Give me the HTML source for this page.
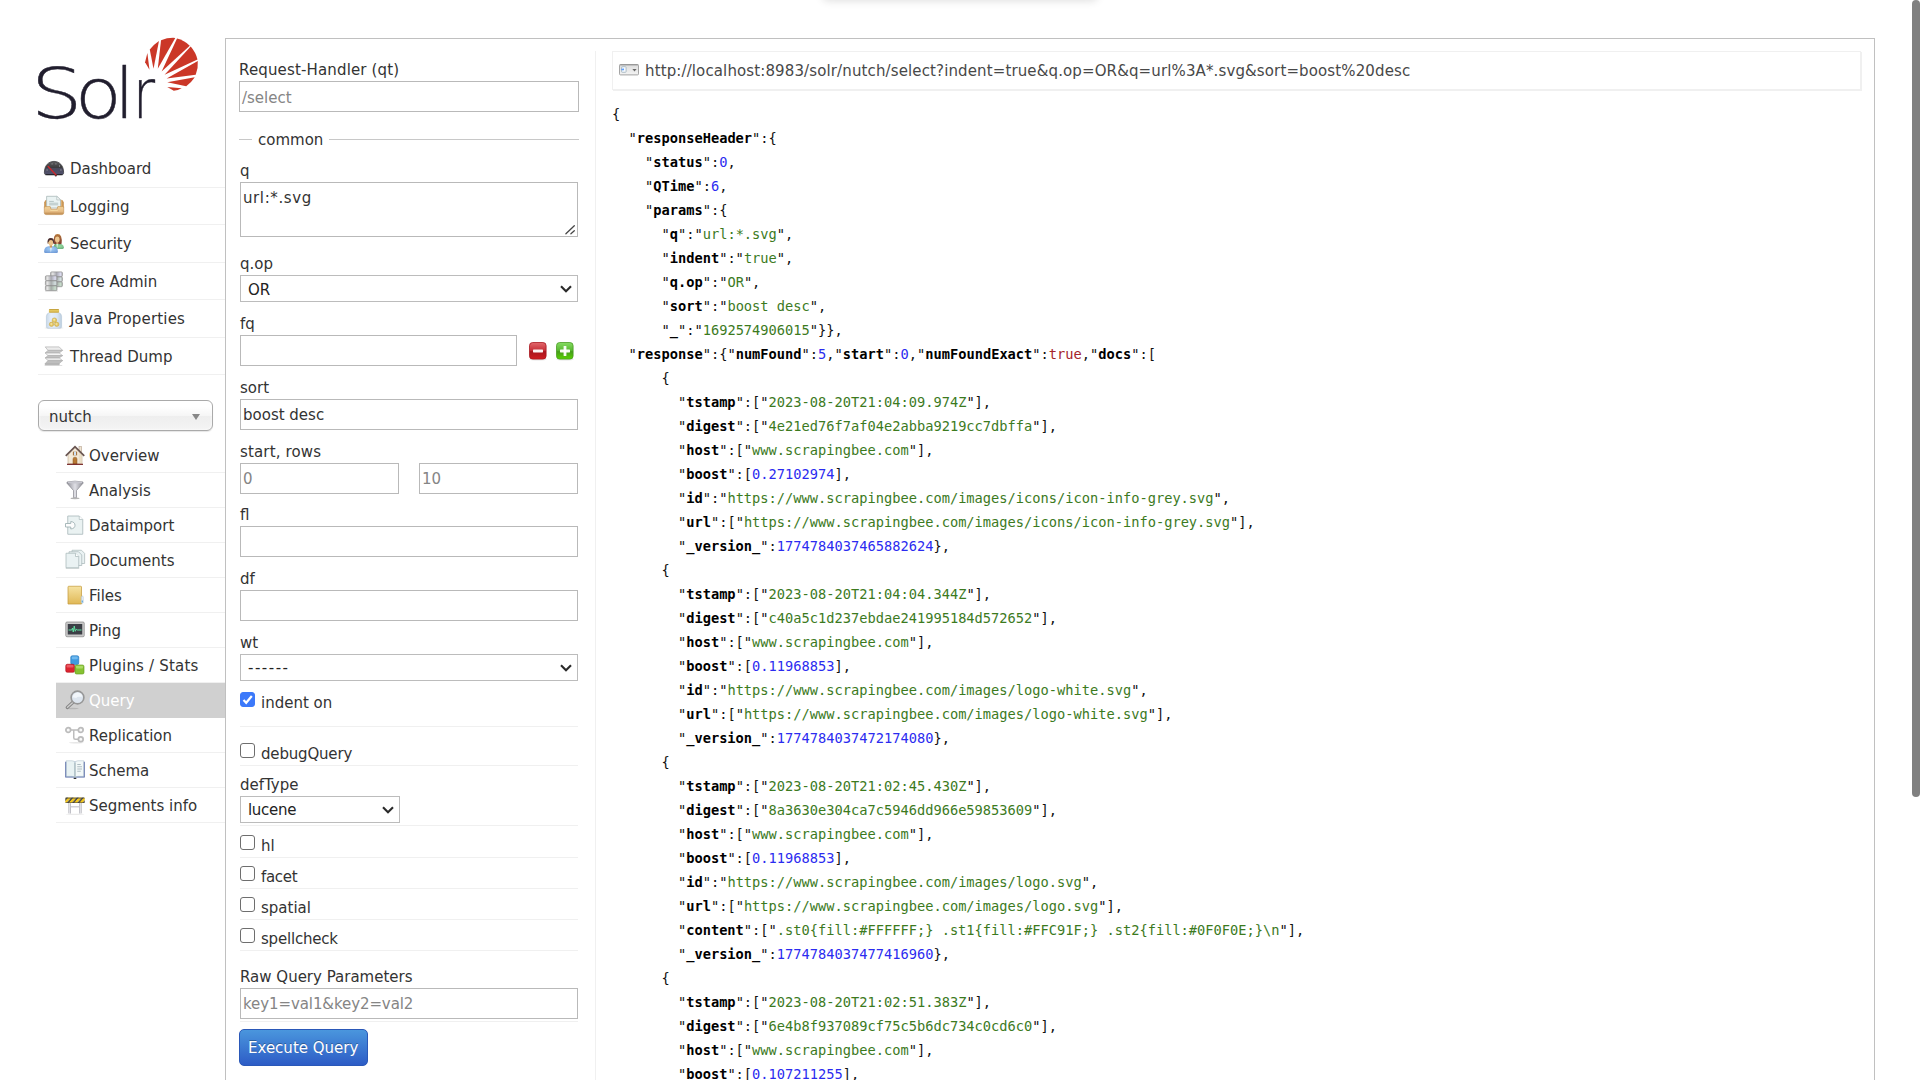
<!DOCTYPE html>
<html lang="en">
<head>
<meta charset="utf-8">
<title>Solr Admin</title>
<style>
html,body{margin:0;padding:0;background:#fff;}
body{width:1920px;height:1080px;overflow:hidden;position:relative;
  font-family:"DejaVu Sans","Liberation Sans",sans-serif;font-size:15px;color:#333;line-height:18px;}
.abs{position:absolute;}
.t{position:absolute;white-space:pre;line-height:18px;height:18px;}
/* top shadow */
#topshadow{position:absolute;left:822px;top:-14px;width:276px;height:12px;border-radius:6px;box-shadow:0 3px 8px rgba(0,0,0,.13);}
/* logo */
#logo-text{position:absolute;left:0;top:54px;margin:0;font-family:"DejaVu Sans Light","DejaVu Sans",sans-serif;font-weight:200;font-size:68.7px;line-height:80px;height:80px;color:#211e2e;white-space:nowrap;}
#logo-text span{display:inline-block;width:0;overflow:visible;transform-origin:0 0;-webkit-text-stroke:.45px #211e2e;}
/* main menu */
#menu{position:absolute;left:38px;top:150px;width:187px;margin:0;padding:0;list-style:none;}
#menu li{height:36.5px;border-bottom:1px solid #f0f0f0;position:relative;}
#menu li span{position:absolute;left:32px;top:10px;line-height:18px;white-space:pre;}
#menu li svg{position:absolute;left:6px;top:8px;}
/* core selector */
#core{position:absolute;left:38px;top:400px;width:173px;height:29px;border:1px solid #aaa;border-radius:6px;
 background:linear-gradient(#fff 20%,#f6f6f6 50%,#eee 52%,#f4f4f4 100%);box-shadow:0 0 3px #fff inset,0 1px 1px rgba(0,0,0,.1);}
#core span{position:absolute;left:10px;top:7px;white-space:pre;}
#core i{position:absolute;left:153px;top:13px;width:0;height:0;border-left:4.5px solid transparent;border-right:4.5px solid transparent;border-top:6px solid #888;}
/* sub menu */
#sub{position:absolute;left:56px;top:438px;width:169px;margin:0;padding:0;list-style:none;}
#sub li{height:34px;border-bottom:1px solid #f0f0f0;position:relative;}
#sub li span{position:absolute;left:33px;top:9px;line-height:18px;white-space:pre;}
#sub li svg{position:absolute;left:9px;top:7px;}
#sub li.active{background:#d0d0d0;border-bottom-color:#d0d0d0;color:#fff;}
/* main panel */
#panel{position:absolute;left:225px;top:38px;width:1648px;height:1060px;border:1px solid #c0c0c0;box-sizing:content-box;}
#divider{position:absolute;left:595px;top:51px;width:1px;height:1040px;background:#f0f0f0;}
/* form */
.lbl{position:absolute;left:239px;white-space:pre;line-height:18px;}
.inp{position:absolute;left:239px;width:338px;height:29px;border:1px solid #b9b9b9;background:#fff;box-sizing:content-box;}
.inp span{position:absolute;left:2px;top:6px;white-space:pre;line-height:18px;}
.inp span.ph{color:#858585;}
.sel{position:absolute;left:240px;width:336px;height:25px;border:1px solid #bcbcbc;background:#fff;}
.sel span{position:absolute;left:7px;top:4px;white-space:pre;line-height:18px;color:#222;}
.sel svg{position:absolute;right:5px;top:9px;}
.hr{position:absolute;left:240px;width:338px;height:1px;background:#f0f0f0;}
.cb{position:absolute;left:240px;width:13px;height:13px;border:1px solid #6e6e6e;border-radius:3px;background:#fff;}
.cb.on{background:#3c79fa;border-color:#3c79fa;}
.cbl{position:absolute;left:261px;white-space:pre;line-height:18px;}
#exec{position:absolute;left:239px;top:1029px;width:127px;height:35px;border:1px solid #2a58b8;border-radius:5px;
 background:linear-gradient(#4a96dd,#2d5cc6);color:#fff;}
#exec span{position:absolute;left:8px;top:9px;white-space:pre;line-height:18px;text-shadow:0 -1px 0 rgba(0,0,0,.3);}
/* result */
#url{position:absolute;left:612px;top:51px;width:1247px;height:37px;border:1px solid #f0f0f0;box-shadow:1px 1px 0 #f0f0f0;}
#url span{position:absolute;left:32px;top:10px;white-space:pre;line-height:18px;color:#484848;letter-spacing:.124px;}
#url svg{position:absolute;left:6px;top:12px;}
#json{position:absolute;left:612px;top:102px;margin:0;font-family:"DejaVu Sans Mono","Liberation Mono",monospace;font-size:13.7px;line-height:24px;color:#111;white-space:pre;}
#json .k{font-weight:bold;color:#000;}
#json .s{color:#3c7a1e;}
#json .n{color:#2b2bf0;}
#json .b{color:#a5252b;}
#scroll{position:absolute;left:1912px;top:0;width:8px;height:797px;border-radius:4px;background:#808080;}
</style>
</head>
<body>
<div id="topshadow"></div>

<!-- logo -->
<div id="logo-text"><span style="margin-left:31.2px;transform:scaleX(1.18)">S</span><span style="margin-left:43.9px;transform:scaleX(1.11)">o</span><span style="margin-left:39.9px">l</span><span style="margin-left:18.1px;transform:scaleX(.78)">r</span></div>
<svg style="position:absolute;left:140px;top:32px" width="64" height="64" viewBox="0 0 1080 1080"><g fill="#cb3727"><path d="M125,355 L85,510 L160,635 Z"/><path d="M165,295 Q235,205 320,150 L228,620 Z"/><path d="M355,140 Q470,92 595,100 L300,620 Z"/><path d="M625,110 Q745,140 840,230 L365,665 Z"/><path d="M855,245 Q940,340 970,465 L415,720 Z"/><path d="M975,490 Q985,610 940,720 L450,785 Z"/><path d="M925,765 Q870,850 780,915 L460,850 Z"/><path d="M705,950 Q640,985 570,990 L460,930 Z"/></g></svg>

<!-- main menu -->
<ul id="menu">
<li><svg width="20" height="20" viewBox="0 0 20 20" overflow="visible" ><defs><linearGradient id="gd" x1="0" y1="0" x2="0" y2="1"><stop offset="0" stop-color="#5c5c5e"/><stop offset=".5" stop-color="#3a3a3c"/><stop offset=".52" stop-color="#4a4a5c"/><stop offset=".9" stop-color="#50506a"/><stop offset="1" stop-color="#101014"/></linearGradient></defs><path d="M0.4,14.6 C0.4,7.4 4.6,3.4 10,3.4 C15.4,3.4 19.6,7.4 19.6,14.6 C19.6,16.2 18.8,16.9 17.4,16.9 L2.6,16.9 C1.2,16.9 0.4,16.2 0.4,14.6 Z" fill="url(#gd)" stroke="#2a2a2e" stroke-width=".7"/><g fill="#9a9aa0" opacity=".8"><rect x="7.4" y="5.4" width="1.4" height="1"/><rect x="11.2" y="5.4" width="1.4" height="1"/><rect x="15" y="7.2" width="1" height="1.6"/><rect x="2.4" y="11.4" width="1.4" height="1.2"/><rect x="16.2" y="11.4" width="1.4" height="1.2"/></g><circle cx="11.8" cy="17.4" r="1.1" fill="#2c2c30"/><path d="M4.2,8.6 L12,16.9" stroke="#c8282e" stroke-width="1.5" stroke-linecap="round"/></svg><span>Dashboard</span></li>
<li><svg width="20" height="20" viewBox="0 0 20 20" overflow="visible" ><defs><linearGradient id="gl" x1="0" y1="0" x2="0" y2="1"><stop offset="0" stop-color="#f2d49c"/><stop offset=".6" stop-color="#e6bc84"/><stop offset="1" stop-color="#b88448"/></linearGradient><linearGradient id="gl2" x1="0" y1="0" x2="1" y2="0"><stop offset="0" stop-color="#b87c34"/><stop offset=".12" stop-color="#e0b070"/><stop offset=".88" stop-color="#e0b070"/><stop offset="1" stop-color="#b87c34"/></linearGradient></defs><path d="M0.3,6.4 Q0.8,3.8 2.6,3.8 L17.4,3.8 Q19.2,3.8 19.7,6.4 L19.7,12 L0.3,12 Z" fill="url(#gl2)"/><path d="M2.6,0.3 L12.8,0.3 L16.6,3.9 L16.6,12 L2.6,12 Z" fill="#eaf3f3" stroke="#a9b9b9" stroke-width=".8"/><path d="M12.8,0.3 L12.8,3.9 L16.6,3.9 Z" fill="#fbfdfd" stroke="#a9b9b9" stroke-width=".7"/><path d="M5.2,5.4 h4.6 M5.2,7.2 h9 M5.2,8.8 h9" stroke="#b4c4c4" stroke-width="1"/><path d="M0.3,10.6 L6.2,10.6 L7,13.2 L13,13.2 L13.8,10.6 L19.7,10.6 L19.7,16.8 Q19.7,18.6 17.8,18.6 L2.2,18.6 Q0.3,18.6 0.3,16.8 Z" fill="url(#gl)" stroke="#c08c4c" stroke-width=".6"/><path d="M6.2,14.4 h7.6" stroke="#f6dca6" stroke-width=".9"/></svg><span>Logging</span></li>
<li><svg width="20" height="20" viewBox="0 0 20 20" overflow="visible" ><defs><linearGradient id="gs1" x1="0" y1="0" x2="0" y2="1"><stop offset="0" stop-color="#b87a3c"/><stop offset="1" stop-color="#7c3a30"/></linearGradient><radialGradient id="gs2" cx=".5" cy=".4" r=".7"><stop offset="0" stop-color="#a4d2fa"/><stop offset="1" stop-color="#6c96d4"/></radialGradient><radialGradient id="gs3" cx=".6" cy=".5" r=".7"><stop offset="0" stop-color="#98dca4"/><stop offset="1" stop-color="#5ea470"/></radialGradient></defs><path d="M9.4,16 Q9.2,10.4 13,10.2 Q19.8,10.4 19.9,14.6 Q19.9,16 18.6,16 Z" fill="url(#gs3)"/><path d="M12.2,10.6 L13.2,15.6 L14.2,10.6 Z" fill="#dceee0"/><path d="M9.8,10.8 Q8.8,1 13.6,1 Q18.6,1 17.6,10.8 Q15.8,11.6 13.6,10.6 Q11.6,11.6 9.8,10.8 Z" fill="url(#gs1)"/><ellipse cx="13.3" cy="6.4" rx="2.3" ry="3" fill="#eec890"/><rect x="12.4" y="8.8" width="1.8" height="2.2" fill="#d8a870"/><path d="M0.1,18.8 Q0.1,13.4 4.8,13.2 L9.2,13.2 Q13.9,13.4 13.9,18.8 Q13.9,20 12.6,20 L1.4,20 Q0.1,20 0.1,18.8 Z" fill="url(#gs2)"/><path d="M5.8,13.4 L6.9,19.8 L8,13.4 Z" fill="#e6eef8"/><rect x="5.8" y="11.6" width="2.2" height="3" fill="#c8945c"/><path d="M3.6,10.6 Q2.8,5 6.8,5 Q10.8,5 10,10.6 Z" fill="#4c3030"/><ellipse cx="6.9" cy="9.8" rx="2.3" ry="2.9" fill="#ecc48c"/><circle cx="4.4" cy="10" r=".8" fill="#e8c088"/></svg><span>Security</span></li>
<li><svg width="20" height="20" viewBox="0 0 20 20" overflow="visible" ><defs><linearGradient id="gc1" x1="0" y1="0" x2="1" y2="0"><stop offset="0" stop-color="#bcbcbc"/><stop offset=".18" stop-color="#e4e4e4"/><stop offset=".5" stop-color="#a8a8b0"/><stop offset=".85" stop-color="#dcdcf0"/><stop offset="1" stop-color="#b0b0b8"/></linearGradient><linearGradient id="gc2" x1="0" y1="0" x2="1" y2="0"><stop offset="0" stop-color="#bcbcbc"/><stop offset=".18" stop-color="#e4e4e4"/><stop offset=".5" stop-color="#a8acac"/><stop offset=".85" stop-color="#d4e0e0"/><stop offset="1" stop-color="#b0b4b4"/></linearGradient><linearGradient id="gc3" x1="0" y1="0" x2="1" y2="0"><stop offset="0" stop-color="#bcbcbc"/><stop offset=".18" stop-color="#e4e4e4"/><stop offset=".5" stop-color="#a4aca6"/><stop offset=".85" stop-color="#c8dccc"/><stop offset="1" stop-color="#a8b4aa"/></linearGradient></defs><g stroke="#8c8c8c" stroke-width=".7"><rect x="6.6" y="0.9" width="11.8" height="4.8" rx="1" fill="url(#gc1)"/><rect x="6.6" y="5.9" width="11.8" height="4.8" rx="1" fill="url(#gc2)"/><rect x="6.6" y="10.9" width="11.8" height="4.8" rx="1" fill="url(#gc3)"/><rect x="1.4" y="4.8" width="11.6" height="4.8" rx="1" fill="url(#gc1)"/><rect x="1.4" y="9.8" width="11.6" height="4.8" rx="1" fill="url(#gc2)"/><rect x="1.4" y="14.8" width="11.6" height="4.8" rx="1" fill="url(#gc3)"/></g><path d="M1,20 h13" stroke="#9a9a9a" stroke-width=".6" opacity=".6"/></svg><span>Core Admin</span></li>
<li><svg width="20" height="20" viewBox="0 0 20 20" overflow="visible" ><defs><linearGradient id="gj" x1="0" y1="0" x2="1" y2="0"><stop offset="0" stop-color="#c8d8e8"/><stop offset=".3" stop-color="#e6effa"/><stop offset=".7" stop-color="#dce8f6"/><stop offset="1" stop-color="#bccede"/></linearGradient><linearGradient id="gj2" x1="0" y1="0" x2="0" y2="1"><stop offset="0" stop-color="#b89430"/><stop offset=".4" stop-color="#e4c860"/><stop offset="1" stop-color="#d0ac44"/></linearGradient></defs><ellipse cx="10" cy="19.9" rx="9.6" ry=".7" fill="#000" opacity=".12"/><path d="M5.6,4.4 Q2.4,5.4 2.4,8.4 L2.4,18.6 Q2.4,20.2 4,20.2 L16,20.2 Q17.6,20.2 17.6,18.6 L17.6,8.4 Q17.6,5.4 14.4,4.4 Z" fill="url(#gj)" stroke="#b4c6d6" stroke-width=".6"/><rect x="4.9" y="1" width="10.2" height="3.7" rx="1" fill="url(#gj2)"/><g fill="#e4c868" stroke="#c4a03c" stroke-width=".5"><circle cx="7.5" cy="16.3" r="2.2"/><circle cx="12.7" cy="16.3" r="2.2"/><circle cx="10.4" cy="12.2" r="2.3"/></g><circle cx="10.2" cy="11.8" r="1" fill="#f6e8a0"/><circle cx="7.3" cy="16" r=".9" fill="#f2e09a"/><circle cx="12.5" cy="16" r=".9" fill="#f2e09a"/></svg><span style="letter-spacing:.19px">Java Properties</span></li>
<li><svg width="20" height="20" viewBox="0 0 20 20" overflow="visible" ><path d="M0.6,19.4 h17.6" stroke="#aaa" stroke-width=".8" opacity=".5"/><g stroke="#b2b2b2" stroke-width=".7" stroke-linejoin="round"><path d="M1.2,0.9 L15.2,0.9 L18.6,4.4 L4,4.4 Z" fill="#ececec"/><path d="M4,4.4 L18.6,4.4 L15.2,7 L1.2,7 Z" fill="#c6c6c6"/><path d="M1.2,7 L15.2,7 L18.6,9.6 L4,9.6 Z" fill="#f4f4f4"/><path d="M4,9.6 L18.6,9.6 L15.2,11.9 L1.2,11.9 Z" fill="#c2c2c2"/><path d="M1.2,11.9 L15.2,11.9 L18.6,14.6 L4,14.6 Z" fill="#eaeaea"/><path d="M4,14.6 L18.6,14.6 L15.2,17.6 L1.2,17.6 Z" fill="#bebebe"/><path d="M1.2,17.6 L15.2,17.6 L15.2,18.8 L1.2,18.8 Z" fill="#b0b0b0"/></g></svg><span>Thread Dump</span></li>
</ul>

<div id="core"><span>nutch</span><i></i></div>

<ul id="sub">
<li><svg width="20" height="20" viewBox="0 0 16 16" overflow="visible" ><g transform="translate(0,.7)"><rect x="11.2" y="0.6" width="2" height="4.4" fill="#efe4d2" stroke="#a89078" stroke-width=".4"/><path d="M2.4,7 L8,1.6 L13.6,7 L13.6,14.4 L2.4,14.4 Z" fill="#f4ead8" stroke="#c4ae92" stroke-width=".5"/><path d="M13.6,7 L13.6,14.4 L11,14.4 L11,5 Z" fill="#e6d8c0" opacity=".7"/><path d="M0.6,8 L8,0.7 L15.4,8" fill="none" stroke="#6a5652" stroke-width="1.4"/><path d="M6.4,14.4 L6.4,10.6 Q6.4,9 8,9 Q9.6,9 9.6,10.6 L9.6,14.4 Z" fill="#b87a34" stroke="#8a5620" stroke-width=".4"/><rect x="6.3" y="4.6" width="3.4" height="3" fill="#a8743c"/><rect x="7.2" y="4.6" width="1.6" height="3" fill="#cfe2f6"/><rect x="1.6" y="14.3" width="12.8" height=".9" fill="#6e1a1a"/></g></svg><span>Overview</span></li>
<li><svg width="20" height="20" viewBox="0 0 16 16" overflow="visible" ><defs><linearGradient id="ga" x1="0" y1="0" x2="1" y2="0"><stop offset="0" stop-color="#8e8e96"/><stop offset=".5" stop-color="#e0e0e6"/><stop offset="1" stop-color="#8e8e96"/></linearGradient></defs><path d="M1.6,1.6 Q8,0.2 14.4,1.6 L14.4,2.6 L9.2,8.4 L9.2,14.2 L6.8,14.2 L6.8,8.4 L1.6,2.6 Z" fill="url(#ga)" stroke="#7c7c84" stroke-width=".5"/><ellipse cx="8" cy="1.9" rx="6" ry=".9" fill="#c8c8d0"/><ellipse cx="8" cy="14.6" rx="3.6" ry=".7" fill="#b4b4b4"/></svg><span>Analysis</span></li>
<li><svg width="20" height="20" viewBox="0 0 16 16" overflow="visible" ><path d="M2.2,0.8 L11.4,0.8 L14.2,3.6 L14.2,15.4 L2.2,15.4 Z" fill="#eaf2f2" stroke="#aebcbe" stroke-width=".7"/><path d="M11.4,0.8 L11.4,3.6 L14.2,3.6" fill="#fff" stroke="#aebcbe" stroke-width=".6"/><path d="M0.4,6.8 L4.6,6.8 L4.6,5.2 Q8,5.6 8,8.2 Q8,10.8 4.6,11.2 L4.6,9.6 L0.4,9.6 Z" fill="#fdfdfd" stroke="#9eb0b2" stroke-width=".7"/></svg><span>Dataimport</span></li>
<li><svg width="20" height="20" viewBox="0 0 16 16" overflow="visible" ><g fill="#eaf2f3" stroke="#a9b8ba" stroke-width=".6"><path d="M5.6,0.2 L13.2,0.2 L15.7,2.7 L15.7,10.8 L5.6,10.8 Z"/><path d="M3.2,1.4 L10.8,1.4 L13.4,4 L13.4,12.4 L3.2,12.4 Z"/><path d="M0.8,2.6 L8.4,2.6 L11,5.2 L11,14.2 L0.8,14.2 Z"/><path d="M8.4,2.6 L8.4,5.2 L11,5.2" fill="#fff"/></g><path d="M0.6,14.7 h10.8" stroke="#8c9a9c" stroke-width=".5" opacity=".6"/></svg><span>Documents</span></li>
<li><svg width="20" height="20" viewBox="0 0 16 16" overflow="visible" ><defs><linearGradient id="gf" x1="0" y1="0" x2="0" y2="1"><stop offset="0" stop-color="#f6e3a2"/><stop offset="1" stop-color="#e0b856"/></linearGradient></defs><path d="M2.4,1.6 Q2.4,1 3,1 L12.6,1 Q13.2,1 13.2,1.6 L13.2,15.2 L2.4,15.2 Z" fill="url(#gf)" stroke="#c69c3e" stroke-width=".6"/><path d="M13,9.6 Q14.2,7.6 14.6,9.6 L14.6,14 Q14,15.6 13,14.2 Z" fill="#e6eef6" stroke="#a8bccc" stroke-width=".4"/><rect x="13.4" y="12.4" width=".9" height="1.6" fill="#5aa8dc"/></svg><span>Files</span></li>
<li><svg width="20" height="20" viewBox="0 0 16 16" overflow="visible" ><rect x="0.6" y="1.6" width="14.8" height="11.8" rx="1" fill="#c9c9c9" stroke="#8c8c8c" stroke-width=".6"/><rect x="2.2" y="3.2" width="11.6" height="8.4" fill="#3c3f46"/><path d="M2.8,8 L5.4,8 L6,6.4 L6.6,9.6 L7.4,4.8 L8.2,9 L9,7.4 L10,8 L13.2,8" fill="none" stroke="#5fe0a0" stroke-width=".8"/></svg><span>Ping</span></li>
<li><svg width="20" height="20" viewBox="0 0 16 16" overflow="visible" ><rect x="4.6" y="0.6" width="6.4" height="7" rx="1.2" fill="#3f9ae0" stroke="#2a78bc" stroke-width=".5"/><rect x="0.6" y="7.4" width="7" height="6.4" rx="1.2" fill="#dc2430" stroke="#b0141e" stroke-width=".5"/><rect x="8" y="8" width="7.2" height="7.2" rx="1.2" fill="#86c232" stroke="#62981c" stroke-width=".5"/><rect x="5.4" y="1.2" width="4.8" height="2.2" rx=".8" fill="#7cc0f2" opacity=".8"/><rect x="8.8" y="8.6" width="5.6" height="2.2" rx=".8" fill="#b4e070" opacity=".8"/><rect x="1.2" y="8" width="5.6" height="2" rx=".8" fill="#f06870" opacity=".8"/></svg><span style="letter-spacing:.2px">Plugins / Stats</span></li>
<li class="active"><svg width="20" height="20" viewBox="0 0 16 16" overflow="visible" ><ellipse cx="6" cy="14.8" rx="5" ry=".6" fill="#000" opacity=".12"/><path d="M6.8,9.4 L1.8,14" stroke="#858585" stroke-width="2.6" stroke-linecap="round"/><path d="M6.6,9.6 L2,13.8" stroke="#cfcfcf" stroke-width="1.1" stroke-linecap="round"/><circle cx="10" cy="6" r="5.1" fill="#dde5ee" stroke="#979797" stroke-width="1.3"/><path d="M6,5.8 Q6.8,2.4 10,2 Q13.2,2.2 14,5.4 L11,5.4 Q9.6,5.4 9,6.4 Z" fill="#f2f6fa"/></svg><span>Query</span></li>
<li><svg width="20" height="20" viewBox="0 0 16 16" overflow="visible" ><g transform="translate(0,1)"><ellipse cx="9" cy="13.2" rx="6" ry=".6" fill="#000" opacity=".1"/><path d="M3.6,3 L10.8,3 M7,3 L7,9.2 Q7,10.4 8.2,10.4 L10.8,10.4" fill="none" stroke="#bdbdbd" stroke-width="1.2"/><g fill="#f8f8f8" stroke="#bcbcbc" stroke-width="1.4"><circle cx="2.6" cy="3" r="1.9"/><circle cx="12.6" cy="3" r="1.9"/><circle cx="12.6" cy="10.4" r="1.9"/></g></g></svg><span>Replication</span></li>
<li><svg width="20" height="20" viewBox="0 0 16 16" overflow="visible" ><path d="M0.2,1.4 L0.2,14 L6.6,14 Q8,14 8,15 Q8,14 9.4,14 L15.8,14 L15.8,1.4 Z" fill="#4d62a4"/><path d="M1,0.6 L5.6,0.6 Q8,0.6 8,2.4 L8,14.2 Q8,13.1 5.6,13.1 L1,13.1 Z" fill="#e8f2f3" stroke="#a6bac6" stroke-width=".4"/><path d="M15,0.6 L10.4,0.6 Q8,0.6 8,2.4 L8,14.2 Q8,13.1 10.4,13.1 L15,13.1 Z" fill="#f2f8f8" stroke="#a6bac6" stroke-width=".4"/><path d="M8,2.4 L8,14" stroke="#9fb2b8" stroke-width=".8"/><path d="M9.8,3.6 h2.8 M9.8,5.4 h3.8 M9.8,7.2 h3.8 M9.8,9 h2.8" stroke="#aebcc2" stroke-width=".8"/><ellipse cx="8" cy="14.7" rx="1.2" ry=".5" fill="#333"/></svg><span>Schema</span></li>
<li><svg width="20" height="20" viewBox="0 0 16 16" overflow="visible" ><defs><pattern id="ps" width="4.2" height="6" patternUnits="userSpaceOnUse" patternTransform="skewX(-40)"><rect width="2.5" height="6" fill="#f4c81c"/><rect x="2.5" width="1.7" height="6" fill="#54524c"/></pattern><linearGradient id="pg" x1="0" y1="0" x2="1" y2="0"><stop offset="0" stop-color="#a8a8b0"/><stop offset=".5" stop-color="#f0f0f4"/><stop offset="1" stop-color="#a0a0a8"/></linearGradient></defs><ellipse cx="8" cy="15.4" rx="7.6" ry=".5" fill="#000" opacity=".08"/><rect x="2.8" y="6" width="2" height="9" rx=".8" fill="url(#pg)"/><rect x="11.2" y="6" width="2" height="9" rx=".8" fill="url(#pg)"/><rect x="4.8" y="8.8" width="6.4" height="1.2" fill="#d0d0d6"/><rect x="0.2" y="2" width="15.6" height="4.4" rx="1" fill="url(#ps)"/><rect x="0.2" y="2" width="15.6" height="1" rx=".5" fill="#3c3a36" opacity=".55"/><rect x="0.2" y="5.6" width="15.6" height=".8" rx=".4" fill="#3c3a36" opacity=".5"/></svg><span>Segments info</span></li>
</ul>

<div id="panel"></div>
<div id="divider"></div>

<!-- form -->
<div class="lbl" style="top:61px;letter-spacing:.15px">Request-Handler (qt)</div>
<div class="inp" style="top:81px"><span class="ph" style="top:7px">/select</span></div>

<div class="hr" style="left:239px;top:139px;width:13px;background:#c8c8c8"></div>
<div class="hr" style="left:329px;top:139px;width:250px;background:#c8c8c8"></div>
<div class="lbl" style="left:258px;top:131px">common</div>

<div class="lbl" style="left:240px;top:162px">q</div>
<div class="inp" style="left:240px;top:182px;width:336px;height:53px"><span style="top:6px;letter-spacing:.6px">url:*.svg</span><svg style="position:absolute;left:323px;top:41px" width="12" height="12" viewBox="0 0 12 12"><path d="M1.9,9.7 L10.3,1.7 M6.9,9.7 L10.3,6.7" stroke="#454545" stroke-width="1.3" stroke-linecap="round"/></svg></div>

<div class="lbl" style="left:240px;top:255px">q.op</div>
<div class="sel" style="top:275px"><span style="top:5px">OR</span><svg width="12" height="8" viewBox="0 0 12 8"><path d="M1,1.2 L6,6.2 L11,1.2" fill="none" stroke="#2a2a2a" stroke-width="2.1"/></svg></div>

<div class="lbl" style="left:240px;top:315px">fq</div>
<div class="inp" style="left:240px;top:335px;width:275px"></div>
<svg style="position:absolute;left:529px;top:342px" width="18" height="19" viewBox="0 0 18 19"><defs><linearGradient id="gb529" x1="0" y1="0" x2="0" y2="1"><stop offset="0" stop-color="#e2686c"/><stop offset=".48" stop-color="#c63038"/><stop offset=".55" stop-color="#a8161e"/><stop offset="1" stop-color="#d01c20"/></linearGradient></defs><ellipse cx="9" cy="17.6" rx="9" ry=".9" fill="#000" opacity=".1"/><rect x=".5" y=".5" width="16.6" height="16.6" rx="3.2" fill="url(#gb529)" stroke="#a81820" stroke-width=".8"/><rect x="4" y="7.6" width="10" height="2.8" rx=".6" fill="#fff" opacity=".95"/></svg>
<svg style="position:absolute;left:556px;top:342px" width="18" height="19" viewBox="0 0 18 19"><defs><linearGradient id="gb556" x1="0" y1="0" x2="0" y2="1"><stop offset="0" stop-color="#86dc64"/><stop offset=".48" stop-color="#58b830"/><stop offset=".55" stop-color="#469c1c"/><stop offset="1" stop-color="#58d200"/></linearGradient></defs><ellipse cx="9" cy="17.6" rx="9" ry=".9" fill="#000" opacity=".1"/><rect x=".5" y=".5" width="16.6" height="16.6" rx="3.2" fill="url(#gb556)" stroke="#4a9c24" stroke-width=".8"/><rect x="4" y="7.6" width="10" height="2.8" rx=".6" fill="#fff" opacity=".95"/><rect x="7.6" y="4" width="2.8" height="10" rx=".6" fill="#fff" opacity=".95"/></svg>

<div class="lbl" style="left:240px;top:379px">sort</div>
<div class="inp" style="left:240px;top:399px;width:336px"><span>boost desc</span></div>

<div class="lbl" style="left:240px;top:443px;letter-spacing:.15px">start, rows</div>
<div class="inp" style="left:240px;top:463px;width:157px"><span class="ph">0</span></div>
<div class="inp" style="left:419px;top:463px;width:157px"><span class="ph">10</span></div>

<div class="lbl" style="left:240px;top:506px">fl</div>
<div class="inp" style="left:240px;top:526px;width:336px"></div>

<div class="lbl" style="left:240px;top:570px">df</div>
<div class="inp" style="left:240px;top:590px;width:336px"></div>

<div class="lbl" style="left:240px;top:634px">wt</div>
<div class="sel" style="top:654px"><span style="letter-spacing:1.5px">------</span><svg width="12" height="8" viewBox="0 0 12 8"><path d="M1,1.2 L6,6.2 L11,1.2" fill="none" stroke="#2a2a2a" stroke-width="2.1"/></svg></div>

<div class="cb on" style="top:692px"><svg style="position:absolute;left:0;top:0" width="13" height="13" viewBox="0 0 13 13"><path d="M2.5,7 L5.2,9.8 L10.8,3" fill="none" stroke="#fff" stroke-width="2.2"/></svg></div>
<div class="cbl" style="top:694px">indent on</div>
<div class="hr" style="top:726px"></div>

<div class="cb" style="top:743px"></div>
<div class="cbl" style="top:745px;letter-spacing:-.18px">debugQuery</div>
<div class="hr" style="top:765px"></div>

<div class="lbl" style="left:240px;top:776px">defType</div>
<div class="sel" style="top:796px;width:158px"><span style="letter-spacing:-.3px">lucene</span><svg width="12" height="8" viewBox="0 0 12 8"><path d="M1,1.2 L6,6.2 L11,1.2" fill="none" stroke="#2a2a2a" stroke-width="2.1"/></svg></div>
<div class="hr" style="top:825px"></div>

<div class="cb" style="top:835px"></div>
<div class="cbl" style="top:837px">hl</div>
<div class="hr" style="top:857px"></div>

<div class="cb" style="top:866px"></div>
<div class="cbl" style="top:868px;letter-spacing:-.3px">facet</div>
<div class="hr" style="top:888px"></div>

<div class="cb" style="top:897px"></div>
<div class="cbl" style="top:899px">spatial</div>
<div class="hr" style="top:919px"></div>

<div class="cb" style="top:928px"></div>
<div class="cbl" style="top:930px;letter-spacing:-.2px">spellcheck</div>
<div class="hr" style="top:950px"></div>

<div class="lbl" style="left:240px;top:968px">Raw Query Parameters</div>
<div class="inp" style="left:240px;top:988px;width:336px"><span class="ph" style="letter-spacing:-.09px">key1=val1&amp;key2=val2</span></div>
<div class="hr" style="top:1021px"></div>

<div id="exec"><span>Execute Query</span></div>

<!-- result -->
<div id="url"><svg width="20" height="12" viewBox="0 0 20 12"><defs><linearGradient id="gu" x1="0" y1="0" x2="0" y2="1"><stop offset="0" stop-color="#dcdcdc"/><stop offset="1" stop-color="#f4f4f4"/></linearGradient></defs><rect x=".5" y=".5" width="19" height="10.4" rx="1" fill="url(#gu)" stroke="#a4a4a4"/><path d="M.8,.9 H19.2" stroke="#8e8e8e" stroke-width=".9"/><rect x="2.5" y="2.7" width="4.6" height="5.6" rx=".8" fill="#f6f9fc" stroke="#9fb2bc" stroke-width=".8"/><path d="M2.4,5.4 h2 M3.6,4.2 l1.3,1.2 l-1.3,1.2" stroke="#3f8cff" stroke-width=".9" fill="none"/><path d="M13.4,4.9 L17.6,4.9 L15.5,7.5 Z" fill="#666"/></svg><span>http://localhost:8983/solr/nutch/select?indent=true&amp;q.op=OR&amp;q=url%3A*.svg&amp;sort=boost%20desc</span></div>
<pre id="json">{
  "<span class="k">responseHeader</span>":{
    "<span class="k">status</span>":<span class="n">0</span>,
    "<span class="k">QTime</span>":<span class="n">6</span>,
    "<span class="k">params</span>":{
      "<span class="k">q</span>":"<span class="s">url:*.svg</span>",
      "<span class="k">indent</span>":"<span class="s">true</span>",
      "<span class="k">q.op</span>":"<span class="s">OR</span>",
      "<span class="k">sort</span>":"<span class="s">boost desc</span>",
      "<span class="k">_</span>":"<span class="s">1692574906015</span>"}},
  "<span class="k">response</span>":{"<span class="k">numFound</span>":<span class="n">5</span>,"<span class="k">start</span>":<span class="n">0</span>,"<span class="k">numFoundExact</span>":<span class="b">true</span>,"<span class="k">docs</span>":[
      {
        "<span class="k">tstamp</span>":["<span class="s">2023-08-20T21:04:09.974Z</span>"],
        "<span class="k">digest</span>":["<span class="s">4e21ed76f7af04e2abba9219cc7dbffa</span>"],
        "<span class="k">host</span>":["<span class="s">www.scrapingbee.com</span>"],
        "<span class="k">boost</span>":[<span class="n">0.27102974</span>],
        "<span class="k">id</span>":"<span class="s">https://www.scrapingbee.com/images/icons/icon-info-grey.svg</span>",
        "<span class="k">url</span>":["<span class="s">https://www.scrapingbee.com/images/icons/icon-info-grey.svg</span>"],
        "<span class="k">_version_</span>":<span class="n">1774784037465882624</span>},
      {
        "<span class="k">tstamp</span>":["<span class="s">2023-08-20T21:04:04.344Z</span>"],
        "<span class="k">digest</span>":["<span class="s">c40a5c1d237ebdae241995184d572652</span>"],
        "<span class="k">host</span>":["<span class="s">www.scrapingbee.com</span>"],
        "<span class="k">boost</span>":[<span class="n">0.11968853</span>],
        "<span class="k">id</span>":"<span class="s">https://www.scrapingbee.com/images/logo-white.svg</span>",
        "<span class="k">url</span>":["<span class="s">https://www.scrapingbee.com/images/logo-white.svg</span>"],
        "<span class="k">_version_</span>":<span class="n">1774784037472174080</span>},
      {
        "<span class="k">tstamp</span>":["<span class="s">2023-08-20T21:02:45.430Z</span>"],
        "<span class="k">digest</span>":["<span class="s">8a3630e304ca7c5946dd966e59853609</span>"],
        "<span class="k">host</span>":["<span class="s">www.scrapingbee.com</span>"],
        "<span class="k">boost</span>":[<span class="n">0.11968853</span>],
        "<span class="k">id</span>":"<span class="s">https://www.scrapingbee.com/images/logo.svg</span>",
        "<span class="k">url</span>":["<span class="s">https://www.scrapingbee.com/images/logo.svg</span>"],
        "<span class="k">content</span>":["<span class="s">.st0{fill:#FFFFFF;} .st1{fill:#FFC91F;} .st2{fill:#0F0F0E;}\n</span>"],
        "<span class="k">_version_</span>":<span class="n">1774784037477416960</span>},
      {
        "<span class="k">tstamp</span>":["<span class="s">2023-08-20T21:02:51.383Z</span>"],
        "<span class="k">digest</span>":["<span class="s">6e4b8f937089cf75c5b6dc734c0cd6c0</span>"],
        "<span class="k">host</span>":["<span class="s">www.scrapingbee.com</span>"],
        "<span class="k">boost</span>":[<span class="n">0.107211255</span>],</pre>

<div id="scroll"></div>
</body>
</html>
